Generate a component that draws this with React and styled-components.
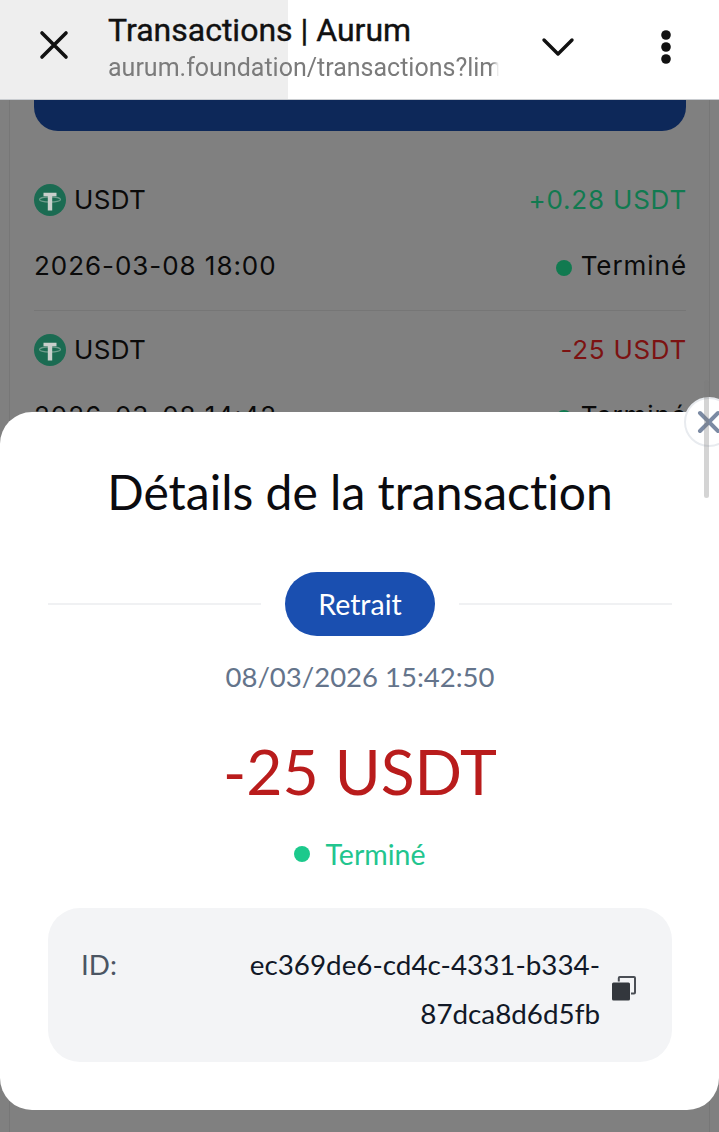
import React from "react"
import styled, { createGlobalStyle } from "styled-components"

const GlobalStyle = createGlobalStyle`
  html, body {
    margin: 0;
    padding: 0;
    background: #808080;
  }
  * {
    box-sizing: border-box;
  }
`

const Screen = styled.div`
  position: relative;
  width: 719px;
  height: 1132px;
  overflow: hidden;
  background: #808080;
  display: flex;
  flex-direction: column;
`

const Toolbar = styled.header`
  position: relative;
  flex: none;
  height: 100px;
  background: #fff;
  border-bottom: 1px solid #c9ccd0;
  display: flex;
  align-items: center;
  font-family: Roboto, sans-serif;
`

const Progress = styled.div`
  position: absolute;
  left: 0;
  top: 0;
  bottom: 0;
  width: 288px;
  background: #eeeeee;
`

const ToolIcon = styled.svg`
  position: relative;
  flex: none;
  display: block;
  color: #111;
`

const CloseSlot = styled.div`
  position: relative;
  flex: none;
  width: 108px;
  padding-left: 39px;
  margin-top: -9px;
`

const TitleBlock = styled.div`
  position: relative;
  width: 391px;
  overflow: hidden;
  white-space: nowrap;
`

const PageTitle = styled.div`
  font-size: 32px;
  line-height: 38px;
  font-weight: 400;
  -webkit-text-stroke: 0.4px #111;
  color: #111;
  margin-top: -4px;
`

const PageUrl = styled.div`
  font-size: 25px;
  line-height: 32px;
  color: #7b7b7b;
  margin-top: 3px;
  mask-image: linear-gradient(to right, #000 98%, transparent);
`

const ToolActions = styled.div`
  position: relative;
  flex: 1;
  display: flex;
  align-items: center;
  padding-left: 42px;
  gap: 85px;
  margin-top: -5px;
`

const Content = styled.main`
  flex: 1;
  margin: 0 9px;
  padding: 0 23px 0 24px;
  border-left: 1px solid #777;
  border-right: 1px solid #777;
`

const BlueBar = styled.div`
  height: 31px;
  background: #0d2859;
  border-radius: 0 0 24px 24px;
  margin-bottom: 50px;
`

const TxRow = styled.div`
  display: flex;
  flex-direction: column;
  gap: 29px;
  padding-bottom: 26px;
  margin-bottom: 20px;
  border-bottom: 1px solid #767676;
`

const TxLine = styled.div`
  display: flex;
  align-items: center;
  justify-content: space-between;
  height: 37px;
  font-family: Inter, sans-serif;
  font-size: 26px;
  letter-spacing: 0.95px;
  color: #0a0a0a;
`

const Coin = styled.div`
  display: flex;
  align-items: center;
  gap: 8px;
  letter-spacing: 0.3px;
`

const Amount = styled.span`
  margin-right: -1px;
  letter-spacing: ${({ $tone }) => ($tone === "in" ? "0.8px" : "0.7px")};
  color: ${({ $tone }) => ($tone === "in" ? "#117a50" : "#7c1212")};
`

const RowStatus = styled.span`
  display: flex;
  align-items: center;
  gap: 9px;
  margin-right: -1px;
`

const RowDot = styled.i`
  width: 16px;
  height: 16px;
  border-radius: 50%;
  background: #117a50;
  margin-top: 5px;
`

// last row still showing under the sheet, only its coin peeks out
const LowerRow = styled(TxLine)`
  margin-top: 600px;
`

const Sheet = styled.section`
  position: absolute;
  left: 0;
  top: 412px;
  height: 698px;
  width: 719px;
  background: #fff;
  border-radius: 32px;
  padding: 48px 47px 0 48px;
  font-family: Lato, sans-serif;
  font-variant-ligatures: none;
  display: flex;
  flex-direction: column;
  align-items: center;
`

const Heading = styled.h2`
  margin: 0;
  font-size: 48px;
  line-height: 64px;
  font-weight: 400;
  color: #0b0b0f;
`

const KindRow = styled.div`
  width: 100%;
  display: flex;
  align-items: center;
  gap: 24px;
  margin-top: 48px;
`

const Rule = styled.div`
  flex: 1;
  height: 2px;
  background: #f0f1f3;
`

const KindPill = styled.div`
  width: 150px;
  height: 64px;
  border-radius: 32px;
  background: #1a4fb0;
  color: #fff;
  font-size: 28.5px;
  display: flex;
  align-items: center;
  justify-content: center;
`

const Stamp = styled.div`
  margin-top: 21px;
  font-size: 27.5px;
  line-height: 40px;
  color: #64748b;
`

const Total = styled.div`
  margin-top: 34px;
  font-size: 62.5px;
  line-height: 80px;
  color: #b91c1c;
`

const SheetStatus = styled.div`
  margin-top: 23px;
  display: flex;
  align-items: center;
  gap: 15px;
  font-size: 28.5px;
  line-height: 40px;
  color: #22c58e;
`

const StatusDot = styled.i`
  width: 16px;
  height: 16px;
  border-radius: 50%;
  background: #1cc98c;
`

const IdCard = styled.div`
  width: 100%;
  height: 154px;
  margin-top: 34px;
  padding: 33px 36px 0 33px;
  border-radius: 32px;
  background: #f3f4f6;
  display: flex;
  align-items: flex-start;
  font-size: 27.8px;
  line-height: 49px;
`

const IdLabel = styled.div`
  flex: none;
  width: 140px;
  color: #4b5563;
  margin-top: -1px;
`

const IdValue = styled.div`
  flex: 1;
  text-align: right;
  color: #111827;
  margin-top: -1px;
`

const CopyIcon = styled.svg`
  flex: none;
  width: 24px;
  height: 25px;
  margin: 35px 0 0 12px;
  display: block;
`

const Scrollbar = styled.div`
  position: absolute;
  left: 704px;
  top: 380px;
  width: 5px;
  height: 118px;
  border-radius: 3px;
  background: rgba(120, 120, 120, 0.32);
  z-index: 3;
`

const Dismiss = styled.button`
  position: absolute;
  left: 684px;
  top: 397px;
  width: 50px;
  height: 50px;
  border-radius: 50%;
  padding: 0;
  border: 2px solid #e8ebef;
  background: #fff;
  display: flex;
  align-items: center;
  justify-content: center;
  z-index: 2;
`

const TetherLogo = () => (
  <svg width="32" height="32" viewBox="0 0 32 32" aria-hidden="true">
    <circle cx="16" cy="16" r="16" fill="#1b6b52" />
    <ellipse cx="16" cy="15.5" rx="10.5" ry="2.6" fill="none" stroke="#6f9d8d" strokeWidth="1.1" />
    <path d="M9.5 8.7h13v3.6h-4.3v14.2h-4.4V12.3H9.5z" fill="#c9cfcc" />
  </svg>
)

const rows = [
  { amount: "+0.28 USDT", tone: "in", date: "2026-03-08 18:00" },
  { amount: "-25 USDT", tone: "out", date: "2026-03-08 14:42" },
]

export default function App() {
  return (
    <Screen>
      <GlobalStyle />
      <Toolbar>
        <Progress />
        <CloseSlot>
          <ToolIcon width="30" height="30" viewBox="0 0 30 30">
            <path d="M3 3l24 24M27 3L3 27" stroke="currentColor" strokeWidth="3.6" strokeLinecap="round" fill="none" />
          </ToolIcon>
        </CloseSlot>
        <TitleBlock>
          <PageTitle>Transactions | Aurum</PageTitle>
          <PageUrl>aurum.foundation/transactions?limit=20</PageUrl>
        </TitleBlock>
        <ToolActions>
          <ToolIcon width="34" height="22" viewBox="0 0 34 22">
            <path d="M3 4l14 14L31 4" stroke="currentColor" strokeWidth="3.4" strokeLinecap="round" strokeLinejoin="round" fill="none" />
          </ToolIcon>
          <ToolIcon width="12" height="36" viewBox="0 0 12 36">
            <circle cx="6" cy="6" r="4.8" fill="currentColor" />
            <circle cx="6" cy="18" r="4.8" fill="currentColor" />
            <circle cx="6" cy="30" r="4.8" fill="currentColor" />
          </ToolIcon>
        </ToolActions>
      </Toolbar>

      <Content>
        <BlueBar />
        {rows.map(row => (
          <TxRow key={row.date}>
            <TxLine>
              <Coin>
                <TetherLogo />
                USDT
              </Coin>
              <Amount $tone={row.tone}>{row.amount}</Amount>
            </TxLine>
            <TxLine>
              <span>{row.date}</span>
              <RowStatus>
                <RowDot />
                Terminé
              </RowStatus>
            </TxLine>
          </TxRow>
        ))}
        <LowerRow>
          <Coin>
            <TetherLogo />
          </Coin>
        </LowerRow>
      </Content>

      <Sheet>
        <Heading>Détails de la transaction</Heading>
        <KindRow>
          <Rule />
          <KindPill>Retrait</KindPill>
          <Rule />
        </KindRow>
        <Stamp>08/03/2026 15:42:50</Stamp>
        <Total>-25 USDT</Total>
        <SheetStatus>
          <StatusDot />
          Terminé
        </SheetStatus>
        <IdCard>
          <IdLabel>ID:</IdLabel>
          <IdValue>ec369de6-cd4c-4331-b334-87dca8d6d5fb</IdValue>
          <CopyIcon viewBox="0 0 24 25">
            <rect x="6.8" y="1" width="16.2" height="16.4" rx="1" fill="none" stroke="#4a4e55" strokeWidth="2" />
            <rect x="-0.5" y="5.5" width="19.5" height="19.5" rx="2" fill="#f3f4f6" />
            <rect x="0" y="6.5" width="18" height="18" rx="1.5" fill="#33373d" />
          </CopyIcon>
        </IdCard>
      </Sheet>

      <Dismiss aria-label="Fermer">
        <svg width="24" height="24" viewBox="0 0 24 24">
          <path d="M3 3l18 18M21 3L3 21" stroke="#7b8aa3" strokeWidth="4" strokeLinecap="round" fill="none" />
        </svg>
      </Dismiss>
      <Scrollbar />
    </Screen>
  )
}
